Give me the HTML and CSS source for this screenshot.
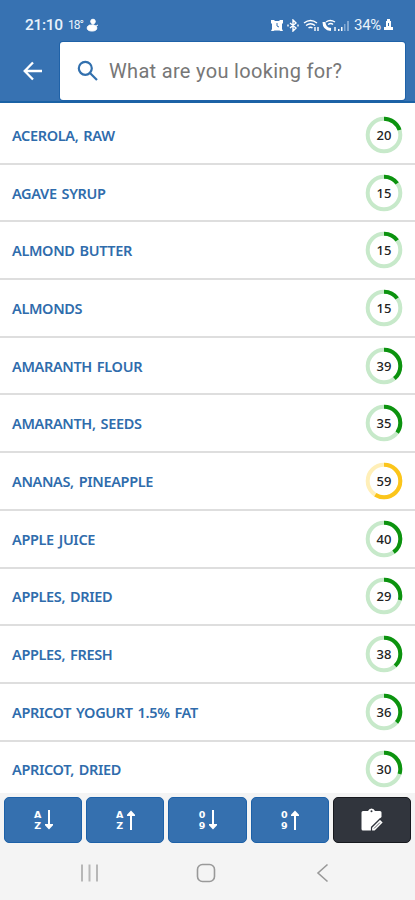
FILE: index.html
```
<!DOCTYPE html>
<html lang="en">

<head>
  <meta charset="UTF-8">
  <meta name="viewport" content="width=device-width, initial-scale=1.0">
  <title>Food list</title>
  <link rel="stylesheet" href="styles.css">
</head>

<body>
  <header class="header">
    <div class="status">
      <span class="time">21:10</span>
      <span class="temp">18°</span>
      <svg class="snowman" width="14" height="14" viewBox="0 0 14 14">
        <circle cx="7" cy="3.500" r="2.300" />
        <ellipse cx="6" cy="10" rx="4.800" ry="3" />
        <path d="M7 5v4M8 9l4-2M3 7l3 2" />
      </svg>
      <div class="status-icons">
        <svg width="12" height="13" viewBox="0 0 12 13">
          <path fill="#fff" d="M0 1h3l1 1h4l1-1h3v3l-1 1v5l1 2H9.500l-1-.5h-5l-1 .5H0l1-2V5L0 4z" />
          <path d="M6 4v3l2 1" fill="none" stroke="#3570b0" />
        </svg>
        <svg class="line" width="12" height="13" viewBox="0 0 12 13">
          <path d="M3 4l6 5-3 3V1l3 3-6 5M1 5.500v2M11 5.500v2" />
        </svg>
        <svg class="line" width="17" height="13" viewBox="0 0 17 13">
          <path d="M1 4Q7.500-1 14 4M3 6.500q4.500-3.500 9 0M5.500 9q2-1.700 4 0M12 8v4M15 8v4" />
        </svg>
        <svg class="line" width="14" height="13" viewBox="0 0 14 13">
          <path d="M2 3q0 7 7 7.500" stroke-width="3" />
          <path d="M4 3q4-3 9 0M6 5.500q3-2 5 0M13 8v4" />
        </svg>
        <svg width="12" height="13" viewBox="0 0 12 13">
          <path fill="#fff" d="M0 10h1.500v2H0zM3 8h1.500v4H3z" />
          <path fill="#80a7d2" d="M6 5h1.500v7H6zM9 2h2v10H9z" />
        </svg>
      </div>
      <span class="battery">34%</span>
      <svg width="9" height="12" viewBox="0 0 9 12">
        <path fill="#fff" d="M3 0h3v2h1v6h2v3H0V8h2V2h1z" />
        <path d="M4.500 4v3" stroke="#3570b0" />
      </svg>
    </div>
    <div class="search-row">
      <svg class="back" width="20" height="20" viewBox="0 0 20 20">
        <path d="M19 10H2M10 1.500L1.700 10l8.300 8.500" />
      </svg>
      <div class="search">
        <svg class="magnifier" width="22" height="22" viewBox="0 0 22 22">
          <circle cx="8.300" cy="8.300" r="6.500" />
          <path d="M13 13l7 7" />
        </svg>
        <span>What are you looking for?</span>
      </div>
    </div>
  </header>

  <ul class="foods" id="foods"></ul>

  <div class="sort-bar">
    <button class="sort" aria-label="Name ascending">
      <span class="order"><b>A</b><b>Z</b></span>
      <svg class="arrow" width="8" height="20" viewBox="0 0 8 20"><path d="M4 0v17M1.200 15L4 18l2.800-3z" /></svg>
    </button>
    <button class="sort" aria-label="Name descending">
      <span class="order"><b>A</b><b>Z</b></span>
      <svg class="arrow" width="8" height="20" viewBox="0 0 8 20"><path d="M4 20V3M1.200 5L4 2l2.800 3z" /></svg>
    </button>
    <button class="sort" aria-label="Score ascending">
      <span class="order"><b>0</b><b>9</b></span>
      <svg class="arrow" width="8" height="20" viewBox="0 0 8 20"><path d="M4 0v17M1.200 15L4 18l2.800-3z" /></svg>
    </button>
    <button class="sort" aria-label="Score descending">
      <span class="order"><b>0</b><b>9</b></span>
      <svg class="arrow" width="8" height="20" viewBox="0 0 8 20"><path d="M4 20V3M1.200 5L4 2l2.800 3z" /></svg>
    </button>
    <button class="sort notes" aria-label="Notes">
      <svg width="24" height="24" viewBox="0 0 24 24">
        <path fill="#fff" d="M3 3h5q1-2.500 3.500-2.500T15 3h5q1.500 0 1.500 1.500V9L11 19v3.500H3q-1.500 0-1.500-1.500V4.500Q1.500 3 3 3z" />
        <circle cx="11.500" cy="3.300" r="1" fill="#31353d" />
        <path fill="#fff" stroke="#31353d" stroke-width="1.200" stroke-linejoin="round" d="M11.500 19.500l8.500-8.500 3.500 3.500-8.500 8.500h-3.500z" />
        <path d="M14 20.500l6-6" stroke="#31353d" stroke-width=".8" />
      </svg>
    </button>
  </div>

  <nav class="nav">
    <svg width="20" height="20" viewBox="0 0 20 20"><path class="recents" d="M2 1.500v17M9.500 1.500v17M17 1.500v17" /></svg>
    <svg width="20" height="20" viewBox="0 0 20 20"><rect x="1.500" y="1.500" width="17" height="17" rx="5" /></svg>
    <svg width="20" height="20" viewBox="0 0 20 20"><path d="M15.500 1.500L6 10l9.500 8.500" /></svg>
  </nav>

  <script>
    const foods = [
      ['Acerola, raw', 20],
      ['Agave syrup', 15],
      ['Almond butter', 15],
      ['Almonds', 15],
      ['Amaranth flour', 39],
      ['Amaranth, seeds', 35],
      ['Ananas, pineapple', 59],
      ['Apple juice', 40],
      ['Apples, dried', 29],
      ['Apples, fresh', 38],
      ['Apricot yogurt 1.5% fat', 36],
      ['Apricot, dried', 30]
    ];

    const list = document.getElementById('foods');

    foods.forEach(([name, score]) => {
      const item = document.createElement('li');
      item.className = score > 50 ? 'food medium' : 'food';
      item.innerHTML = `
        <span class="name">${name.toUpperCase()}</span>
        <span class="score">
          <svg width="38" height="38" viewBox="0 0 38 38">
            <circle class="track" cx="19" cy="19" r="16.300" />
            <circle class="value" cx="19" cy="19" r="16.300" pathLength="100" stroke-dasharray="${score} 100" />
          </svg>
          <span>${score}</span>
        </span>`;
      list.appendChild(item);
    });
  </script>
</body>

</html>
```
FILE: styles.css
```
* {
  box-sizing: border-box;
}

body {
  margin: 0;
  height: 900px;
  display: flex;
  flex-direction: column;
  overflow: hidden;
  background: #f4f4f4;
  font-family: "Noto Sans", sans-serif;
}

.header {
  height: 103px;
  flex: none;
  background: #3772b2;
  border-bottom: 2px solid #1b62a5;
  font-family: Roboto, sans-serif;
}

.status {
  height: 42px;
  padding: 8px 22px 0 25px;
  display: flex;
  align-items: center;
  color: #e9f2fb;
}

.time {
  width: 43px;
  font-size: 15.5px;
  letter-spacing: -0.3px;
  font-weight: 500;
}

.temp {
  width: 18px;
  font-size: 12px;
  letter-spacing: -1px;
}

.snowman {
  fill: #fff;
  stroke: #fff;
}

.status-icons {
  margin-left: auto;
  display: flex;
  gap: 4px;
}

.status-icons svg:nth-child(n+4) {
  margin-left: -2px;
}

.line {
  fill: none;
  stroke: #fff;
  stroke-width: 1.4;
}

.battery {
  margin: 0 3px 0 4px;
  font-size: 15px;
  letter-spacing: -0.3px;
}

.search-row {
  display: flex;
}

.back {
  margin: 19px 17px 0 23px;
  fill: none;
  stroke: #fff;
  stroke-width: 2.3;
}

.search {
  width: 345px;
  height: 58px;
  padding-left: 17px;
  display: flex;
  align-items: center;
  background: #fff;
  border-radius: 3px;
  box-shadow: 0 0 0 1px #1f62a8;
  color: #777;
  font-size: 20px;
  letter-spacing: 0.32px;
}

.magnifier {
  margin-right: 10px;
  fill: none;
  stroke: #3270ae;
  stroke-width: 2.2;
}

.foods {
  height: 690px;
  flex: none;
  margin: 0;
  padding: 4px 0 0;
  overflow: hidden;
  list-style: none;
  background: #fff;
}

.food {
  height: 57.7px;
  padding: 0 12px;
  display: flex;
  align-items: center;
  justify-content: space-between;
  border-bottom: 2px solid #dedede;
}

.name {
  color: #2f6cac;
  font-size: 14.5px;
  font-weight: 600;
  letter-spacing: -0.35px;
  word-spacing: 1.5px;
}

.score {
  display: grid;
  place-items: center;
  color: #222;
  font-size: 13px;
  font-weight: 500;
}

.score > * {
  grid-area: 1 / 1;
}

.score svg {
  fill: none;
  stroke-width: 4;
  transform: rotate(-90deg);
}

.track {
  stroke: #c7e9ca;
}

.value {
  stroke: #0c930f;
}

.medium .track {
  stroke: #ffefb8;
}

.medium .value {
  stroke: #fbc51b;
}

.sort-bar {
  padding: 4px 4px 0;
  display: grid;
  grid-template-columns: repeat(5, 1fr);
  gap: 4px;
}

.sort {
  height: 46px;
  padding: 0;
  display: flex;
  align-items: center;
  justify-content: center;
  gap: 3px;
  background: #3570af;
  border: 1px solid #1d61a8;
  border-radius: 5px;
  color: #fff;
}

.notes {
  background: #31353d;
  border-color: #17191e;
}

.order {
  width: 8px;
  display: flex;
  flex-direction: column;
  align-items: center;
  font: 9.5px/11px "DejaVu Sans", sans-serif;
}

.arrow {
  fill: #fff;
  stroke: #fff;
  stroke-width: 2;
}

.nav {
  flex: 1;
  padding: 20px 83px 0 80px;
  display: flex;
  justify-content: space-between;
}

.nav svg {
  fill: none;
  stroke: #999;
  stroke-width: 1.6;
}

.nav .recents {
  stroke: #b7b7b7;
  stroke-width: 2;
}
```
